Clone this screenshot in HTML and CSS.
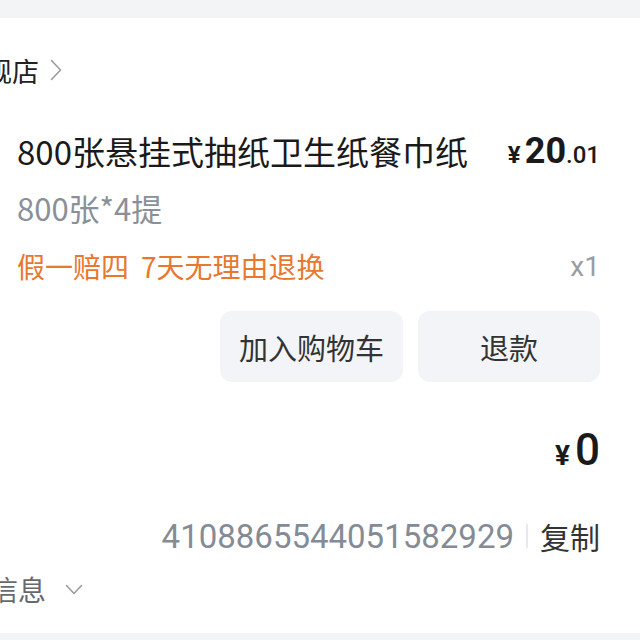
FILE: index.html
```html
<!DOCTYPE html>
<html lang="zh-CN">
<head>
    <meta charset="UTF-8">
    <meta name="viewport" content="width=device-width, initial-scale=1.0">
    <title>订单详情</title>
    <link rel="stylesheet" href="styles.css">
</head>
<body>
    <div class="card">
        <div class="shop-row">
            <span class="shop-name">旗舰店</span>
            <svg class="chevron-right" width="12" height="22" viewBox="0 0 12 22">
                <polyline points="1.5,1.5 10.5,11 1.5,20.5" fill="none" stroke="#9a9da3" stroke-width="1.6" stroke-linecap="round" stroke-linejoin="round"/>
            </svg>
        </div>

        <div class="goods">
            <div class="goods-top">
                <div class="goods-title">800张悬挂式抽纸卫生纸餐巾纸</div>
                <div class="goods-price">
                    <span class="yen">¥</span><span class="int">20</span><span class="dec">.01</span>
                </div>
            </div>
            <div class="goods-spec">800张*4提</div>
            <div class="goods-tags">
                <div class="tags">
                    <span>假一赔四</span>
                    <span>7天无理由退换</span>
                </div>
                <span class="qty">x1</span>
            </div>
        </div>

        <div class="actions">
            <button class="btn">加入购物车</button>
            <button class="btn btn-wide">退款</button>
        </div>

        <div class="total">
            <span class="yen-lg">¥</span><span class="total-num">0</span>
        </div>

        <div class="order-row">
            <span class="order-no">4108865544051582929</span>
            <span class="divider"></span>
            <span class="copy">复制</span>
        </div>

        <div class="more-row">
            <span class="more">更多信息</span>
            <svg class="chevron-down" width="18" height="11" viewBox="0 0 18 11">
                <polyline points="1.5,1.5 9,9.5 16.5,1.5" fill="none" stroke="#9a9da3" stroke-width="1.6" stroke-linecap="round" stroke-linejoin="round"/>
            </svg>
        </div>
    </div>
</body>
</html>
```

FILE: styles.css
```css
* {
    margin: 0;
    padding: 0;
    box-sizing: border-box;
}

body {
    font-family: "Noto Sans CJK SC", "Noto Sans", sans-serif;
    background: #f3f4f6;
    padding-top: 18px;
    height: 640px;
    overflow: hidden;
    color: #1c1c1e;
}

.card {
    background: #fff;
    height: 615px;
    padding: 0 40px 0 17px;
    overflow: hidden;
}

.shop-row {
    display: flex;
    align-items: center;
    height: 44px;
    margin-top: 30px;
    gap: 11px;
}

.shop-name {
    margin-left: -59px;
    font-size: 27px;
    color: #222;
    white-space: nowrap;
}

.chevron-right {
    flex-shrink: 0;
}

.goods {
    margin-top: 37px;
}

.goods-top {
    display: flex;
    justify-content: space-between;
    align-items: center;
    height: 44px;
}

.goods-title {
    font-size: 33px;
    color: #1a1a1a;
    white-space: nowrap;
}

.goods-price {
    font-family: Roboto, "Noto Sans", sans-serif;
    font-weight: 700;
    color: #1a1a1a;
    white-space: nowrap;
}

.goods-price .yen {
    font-size: 24px;
    margin-right: 4px;
}

.goods-price .int {
    font-size: 36px;
}

.goods-price .dec {
    font-size: 24px;
    font-weight: 500;
}

.goods-spec {
    margin-top: 15px;
    height: 40px;
    line-height: 40px;
    font-size: 31px;
    color: #8a9099;
}

.goods-tags {
    display: flex;
    justify-content: space-between;
    align-items: center;
    margin-top: 18px;
    height: 40px;
}

.tags {
    display: flex;
    gap: 12px;
    font-size: 28px;
    color: #e8782f;
}

.qty {
    font-family: Roboto, "Noto Sans", sans-serif;
    font-size: 28px;
    color: #9a9da3;
}

.actions {
    display: flex;
    justify-content: flex-end;
    gap: 15px;
    margin-top: 25px;
}

.btn {
    width: 183px;
    height: 71px;
    border: none;
    border-radius: 12px;
    background: #f2f4f7;
    font-family: "Noto Sans CJK SC", sans-serif;
    font-size: 29px;
    color: #333;
}

.btn-wide {
    width: 182px;
}

.total {
    display: flex;
    justify-content: flex-end;
    align-items: baseline;
    margin-top: 42px;
    height: 48px;
    font-family: Roboto, "Noto Sans", sans-serif;
    font-weight: 700;
    color: #1a1a1a;
}

.yen-lg {
    font-size: 28px;
    margin-right: 5px;
}

.total-num {
    font-size: 44px;
    font-weight: 500;
}

.order-row {
    display: flex;
    justify-content: flex-end;
    align-items: center;
    margin-top: 42px;
    height: 44px;
}

.order-no {
    font-family: Roboto, "Noto Sans", sans-serif;
    font-size: 33px;
    color: #858b95;
}

.divider {
    width: 2px;
    height: 24px;
    background: #e6e8eb;
    margin: 0 12px;
}

.copy {
    font-size: 30px;
    color: #333;
}

.more-row {
    display: flex;
    align-items: center;
    gap: 19px;
    margin-top: 11px;
    height: 40px;
}

.more {
    margin-left: -83px;
    font-size: 28px;
    color: #666a70;
    white-space: nowrap;
}
```
